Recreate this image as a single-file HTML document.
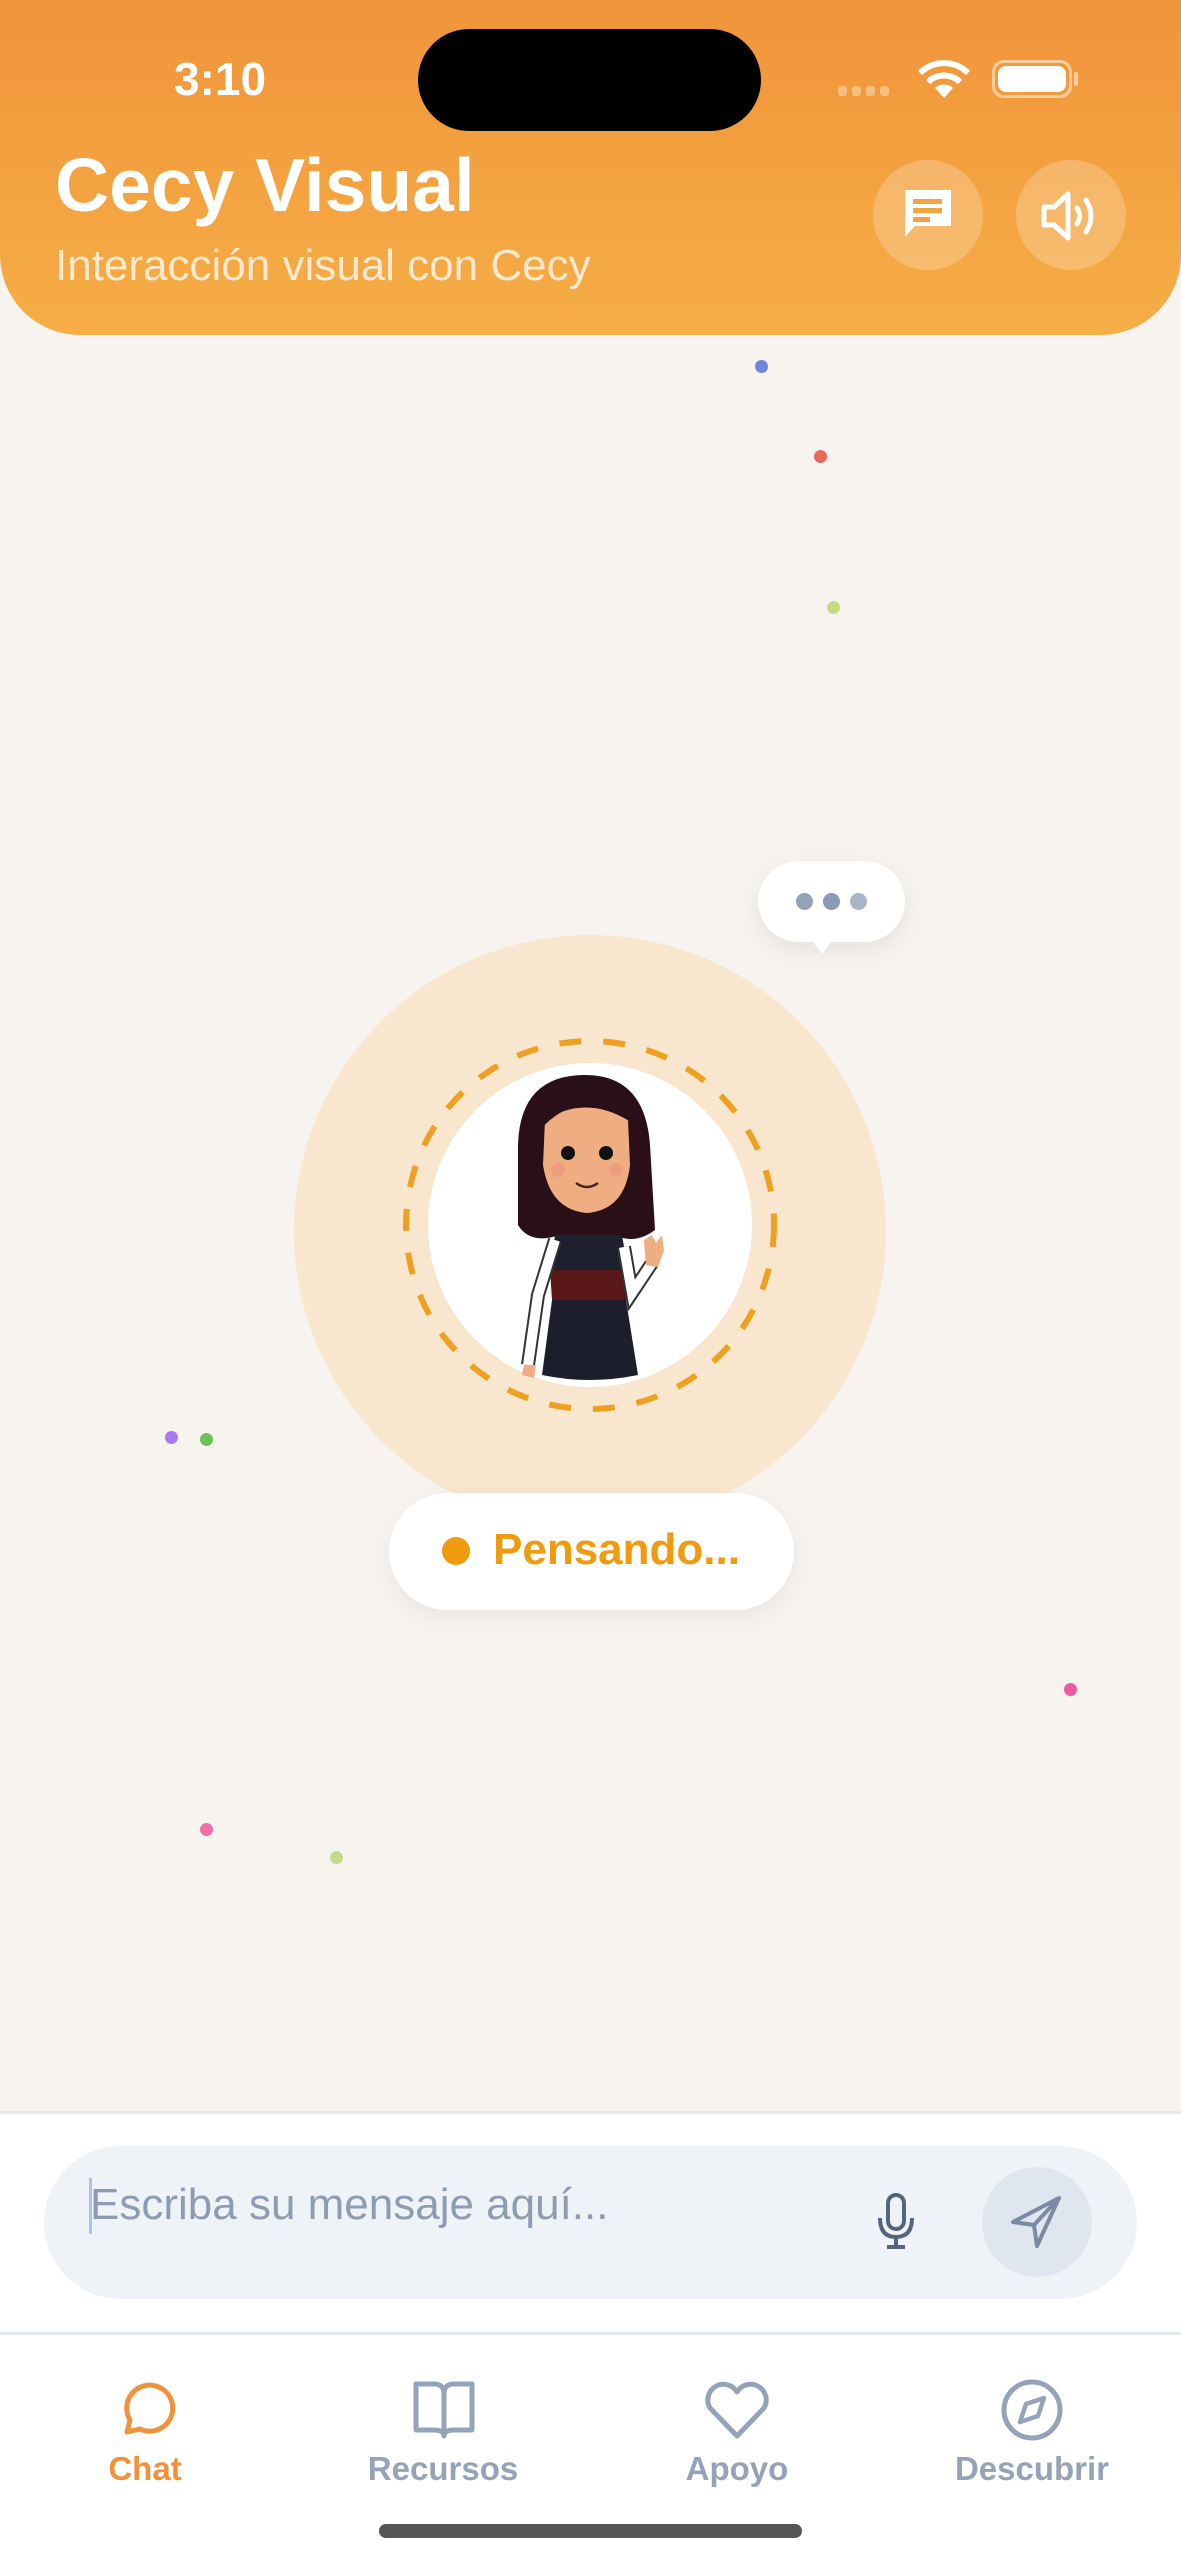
<!DOCTYPE html>
<html><head><meta charset="utf-8"><style>
*{margin:0;padding:0;box-sizing:border-box}
body{width:1181px;height:2560px;background:#F7F3EE;font-family:"Liberation Sans",sans-serif;position:relative;overflow:hidden}
.abs{position:absolute}
.hdr{left:0;top:0;width:1181px;height:335px;background:linear-gradient(#F0943A,#F6AE46);border-radius:0 0 80px 80px}
.dot{position:absolute;width:13px;height:13px;border-radius:50%}
.tab{position:absolute;top:2370px;width:200px;text-align:center;font-size:33px;font-weight:bold;color:#94A3B8}
</style></head><body>
<div class="abs hdr"></div>
<div class="abs" style="left:174px;top:52px;font-size:46px;font-weight:bold;color:#fff">3:10</div>
<div class="abs" style="left:418px;top:29px;width:343px;height:102px;border-radius:51px;background:#000"></div>
<div class="abs" style="left:838px;top:86px;width:52px;height:10px;display:flex;gap:5px"><i style="width:9px;height:10px;background:rgba(255,255,255,.35);border-radius:3px"></i><i style="width:9px;height:10px;background:rgba(255,255,255,.35);border-radius:3px"></i><i style="width:9px;height:10px;background:rgba(255,255,255,.35);border-radius:3px"></i><i style="width:9px;height:10px;background:rgba(255,255,255,.35);border-radius:3px"></i></div>
<svg class="abs" style="left:915px;top:58px" width="58" height="42" viewBox="0 0 58 42"><path d="M29 40 L20 30 A13 13 0 0 1 38 30 Z" fill="#fff"/><path d="M13 24 A23 23 0 0 1 45 24" stroke="#fff" stroke-width="6" fill="none"/><path d="M5 15 A34 34 0 0 1 53 15" stroke="#fff" stroke-width="6" fill="none"/></svg>
<div class="abs" style="left:992px;top:60px;width:80px;height:38px;border:3px solid rgba(255,255,255,.5);border-radius:12px"></div>
<div class="abs" style="left:998px;top:66px;width:68px;height:26px;background:#fff;border-radius:8px"></div>
<div class="abs" style="left:1074px;top:72px;width:4px;height:14px;background:rgba(255,255,255,.5);border-radius:2px"></div>
<div class="abs" style="left:55px;top:142px;font-size:75px;font-weight:bold;color:#fff">Cecy Visual</div>
<div class="abs" style="left:55px;top:241px;font-size:44px;color:rgba(255,255,255,.75)">Interacción visual con Cecy</div>
<div class="abs" style="left:873px;top:160px;width:110px;height:110px;border-radius:50%;background:rgba(255,255,255,.22)"></div>
<div class="abs" style="left:1016px;top:160px;width:110px;height:110px;border-radius:50%;background:rgba(255,255,255,.22)"></div>
<svg class="abs" style="left:900px;top:188px" width="56" height="56" viewBox="0 0 56 56"><path d="M5 2 H51 V38 H15 L5 49 Z" fill="#fff"/><rect x="13" y="11" width="29" height="5" fill="#F4A441"/><rect x="13" y="20" width="29" height="5" fill="#F4A441"/><rect x="13" y="29" width="17" height="5" fill="#F4A441"/></svg>
<svg class="abs" style="left:1040px;top:188px" width="64" height="56" viewBox="0 0 64 56"><path d="M4 19 H14 L28 6 V50 L14 37 H4 Z" stroke="#fff" stroke-width="5" fill="none" stroke-linejoin="round"/><path d="M37 20 Q42 28 37 36" stroke="#fff" stroke-width="5" fill="none" stroke-linecap="round"/><path d="M46 12 Q56 28 46 44" stroke="#fff" stroke-width="5" fill="none" stroke-linecap="round"/></svg>

<div class="dot" style="left:755px;top:360px;background:#6F86E0"></div>
<div class="dot" style="left:814px;top:450px;background:#E8685A"></div>
<div class="dot" style="left:827px;top:601px;background:#C8DB84"></div>
<div class="dot" style="left:827px;top:1307px;background:#F4B566"></div>
<div class="dot" style="left:165px;top:1431px;background:#A77CF0"></div>
<div class="dot" style="left:200px;top:1433px;background:#72BE5E"></div>
<div class="dot" style="left:1064px;top:1683px;background:#EE5A9E"></div>
<div class="dot" style="left:200px;top:1823px;background:#EE6FA6"></div>
<div class="dot" style="left:330px;top:1851px;background:#C4DC88"></div>

<div class="abs" style="left:294px;top:935px;width:592px;height:592px;border-radius:50%;background:#F8E6CF"></div>
<svg class="abs" style="left:400px;top:1035px" width="380" height="380" viewBox="0 0 380 380"><circle cx="190" cy="190" r="184" stroke="#F0A020" stroke-width="6" fill="none" stroke-dasharray="22 22"/><circle cx="190" cy="190" r="162" fill="#fff"/>
<g>
<path d="M118 110 Q120 40 185 40 Q245 40 250 110 L255 195 Q235 210 215 200 L160 200 Q130 210 118 190 Z" fill="#2A0E18"/>
<path d="M145 85 Q185 60 228 85 L230 130 Q225 175 187 178 Q150 175 143 130 Z" fill="#EFAE82"/>
<path d="M140 85 Q185 50 235 90 Q215 75 185 70 Q160 72 140 95 Z" fill="#2A0E18"/>
<circle cx="168" cy="118" r="7" fill="#111"/><circle cx="206" cy="118" r="7" fill="#111"/>
<path d="M176 148 Q187 156 198 148" stroke="#4a2020" stroke-width="2.5" fill="none"/>
<circle cx="158" cy="135" r="7" fill="#F08C80" opacity=".5"/><circle cx="216" cy="135" r="7" fill="#F08C80" opacity=".5"/>
<path d="M155 200 L222 200 L228 235 L150 235 Z" fill="#1E2030"/>
<path d="M150 235 L228 235 L226 265 L152 265 Z" fill="#5A1718"/>
<path d="M152 265 L226 265 L238 340 Q190 350 142 340 Z" fill="#1C1E2C"/>
<path d="M155 205 L138 260 L128 330" stroke="#333" stroke-width="14" fill="none"/>
<path d="M155 205 L138 260 L128 330" stroke="#fff" stroke-width="10" fill="none"/>
<path d="M224 212 L232 258 L252 228" stroke="#333" stroke-width="14" fill="none"/>
<path d="M224 212 L232 258 L252 228" stroke="#fff" stroke-width="10" fill="none"/>
<path d="M246 230 L244 205 L252 200 L256 208 L262 200 L264 215 L258 232 Z" fill="#EFAE82"/>
<path d="M124 330 L136 330 L134 343 L122 340 Z" fill="#EFAE82"/>
</g></svg>
<div class="abs" style="left:758px;top:861px;width:147px;height:81px;border-radius:41px;background:#fff;box-shadow:0 8px 24px rgba(0,0,0,.08)"></div>
<div class="abs" style="left:810px;top:938px;width:0;height:0;border-left:12px solid transparent;border-right:12px solid transparent;border-top:16px solid #fff"></div>
<div class="abs" style="left:796px;top:893px;width:17px;height:17px;border-radius:50%;background:#94A3B8"></div>
<div class="abs" style="left:823px;top:893px;width:17px;height:17px;border-radius:50%;background:#8B9BB3"></div>
<div class="abs" style="left:850px;top:893px;width:17px;height:17px;border-radius:50%;background:#A9B6C8"></div>

<div class="abs" style="left:389px;top:1493px;width:405px;height:117px;border-radius:59px;background:#fff;box-shadow:0 8px 24px rgba(0,0,0,.06)"></div>
<div class="abs" style="left:442px;top:1537px;width:28px;height:28px;border-radius:50%;background:#F09A10"></div>
<div class="abs" style="left:493px;top:1525px;font-size:44px;font-weight:bold;color:#F09A10">Pensando...</div>

<div class="abs" style="left:0;top:2111px;width:1181px;height:449px;background:#fff;border-top:3px solid #E5E9EF"></div>
<div class="abs" style="left:44px;top:2146px;width:1093px;height:153px;border-radius:77px;background:#EFF3F8"></div>
<div class="abs" style="left:89px;top:2178px;width:3px;height:56px;background:#A9C2F5"></div>
<div class="abs" style="left:90px;top:2180px;font-size:44px;color:#8E9CB2">Escriba su mensaje aquí...</div>
<svg class="abs" style="left:875px;top:2192px" width="42" height="60" viewBox="0 0 42 60"><rect x="13" y="3" width="16" height="34" rx="8" stroke="#56657E" stroke-width="4" fill="none"/><path d="M5 26 Q5 45 21 45 Q37 45 37 26" stroke="#56657E" stroke-width="4" fill="none"/><path d="M21 45 V55 M12 55 H30" stroke="#56657E" stroke-width="4"/></svg>
<div class="abs" style="left:982px;top:2167px;width:110px;height:110px;border-radius:50%;background:#DFE6EF"></div>
<svg class="abs" style="left:1007px;top:2192px" width="60" height="60" viewBox="0 0 60 60"><path d="M52 6 L6 30 L27 33 L30 54 Z M27 33 L52 6" stroke="#7A8AA3" stroke-width="4" fill="none" stroke-linejoin="round"/></svg>

<div class="abs" style="left:0;top:2332px;width:1181px;height:3px;background:#E5E9EF"></div>
<svg class="abs" style="left:117px;top:2380px" width="58" height="58" viewBox="0 0 58 58"><path d="M10 52 L13 40 A23 23 0 1 1 23 49 Z" stroke="#F0923A" stroke-width="5" fill="none" stroke-linejoin="round"/></svg>
<svg class="abs" style="left:412px;top:2380px" width="64" height="60" viewBox="0 0 64 60"><path d="M4 4 H22 Q32 4 32 14 V56 Q32 50 22 50 H4 Z M60 4 H42 Q32 4 32 14 V56 Q32 50 42 50 H60 Z" stroke="#94A3B8" stroke-width="5" fill="none" stroke-linejoin="round"/></svg>
<svg class="abs" style="left:702px;top:2380px" width="70" height="60" viewBox="0 0 70 60"><path d="M35 56 L8 28 A14 14 0 0 1 35 12 A14 14 0 0 1 62 28 Z" stroke="#94A3B8" stroke-width="5" fill="none" stroke-linejoin="round"/></svg>
<svg class="abs" style="left:1000px;top:2378px" width="64" height="64" viewBox="0 0 64 64"><circle cx="32" cy="32" r="28" stroke="#94A3B8" stroke-width="5" fill="none"/><path d="M44 20 L38 38 L20 44 L26 26 Z" stroke="#94A3B8" stroke-width="4.5" fill="none" stroke-linejoin="round"/></svg>
<div class="tab" style="left:45px;top:2450px;color:#F0923A">Chat</div>
<div class="tab" style="left:343px;top:2450px">Recursos</div>
<div class="tab" style="left:637px;top:2450px">Apoyo</div>
<div class="tab" style="left:932px;top:2450px">Descubrir</div>
<div class="abs" style="left:379px;top:2524px;width:423px;height:14px;border-radius:7px;background:#555"></div>
</body></html>
